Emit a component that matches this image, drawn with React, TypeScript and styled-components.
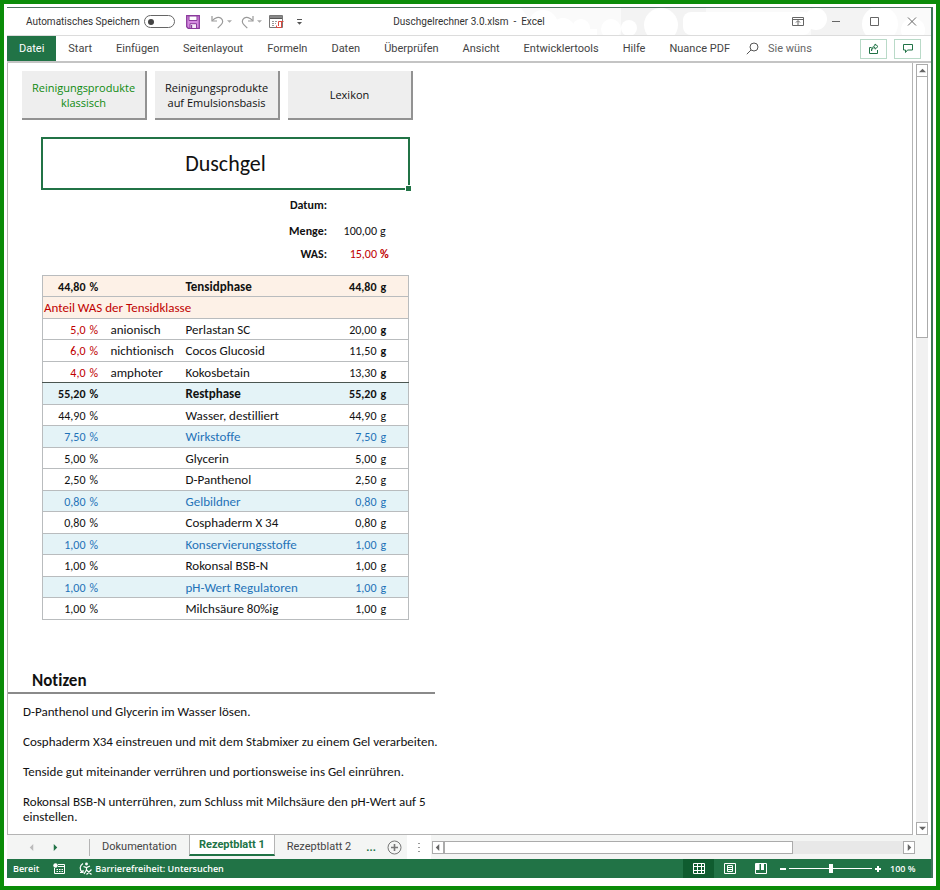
import React from "react";
import styled, { createGlobalStyle, css } from "styled-components";

const UI = `Roboto, "Open Sans", sans-serif`;
const BUTTON = `"Open Sans", "Noto Sans", sans-serif`;
const SHEET = `Carlito, Lato, "Open Sans", sans-serif`;
const GREEN = "#217346";

const GlobalStyle = createGlobalStyle`
  *, *::before, *::after { box-sizing: border-box; }
  body { margin: 0; background: #fff; }
  button, input { font: inherit; color: inherit; margin: 0; }
  button { padding: 0; border: 0; background: none; }
`;

const Frame = styled.div`
  min-height: 100vh;
  display: flex;
  border: 4px solid #0a8c08;
  padding: 3px 3px 8px;
  background: #fff;
`;

const Window = styled.div`
  flex: 1;
  min-width: 0;
  display: flex;
  flex-direction: column;
  border-top: 1px solid #4f7563;
  border-right: 2px solid #3d7558;
  font-family: ${UI};
  font-size: 11px;
  color: #444;
`;

/* ---------- title bar ---------- */

const TitleBar = styled.header`
  position: relative;
  height: 28px;
  display: grid;
  grid-template-columns: 1fr auto 1fr;
  align-items: center;
  border-bottom: 1px solid #dcdcdc;
  font-size: 10px;
  color: #333;
`;

const Clouds = styled.svg`
  position: absolute;
  top: 0;
  right: 0;
  width: 420px;
  height: 27px;
`;

const QuickAccess = styled.div`
  display: flex;
  align-items: center;
  padding-left: 19px;
`;

const AutoSave = styled.label`
  display: flex;
  align-items: center;
  gap: 4px;
`;

const Toggle = styled.input`
  appearance: none;
  width: 31px;
  height: 13px;
  border: 1px solid #666;
  border-radius: 7px;
  background: #fff;
  display: flex;
  align-items: center;
  padding-left: 3px;
  &::before {
    content: "";
    width: 6px;
    height: 6px;
    border-radius: 50%;
    background: #444;
  }
`;

const QuickIcons = styled.div`
  display: flex;
  align-items: center;
  margin-left: 11px;
`;

const QuickButton = styled.button<{ $gap: number }>`
  display: flex;
  margin-right: ${(p) => p.$gap}px;
`;

const DocTitle = styled.div`
  position: relative;
  white-space: pre;
`;

const WindowButtons = styled.div`
  position: relative;
  display: flex;
  justify-content: flex-end;
  gap: 26px;
  padding-right: 13px;
`;

const WindowButton = styled.button`
  display: flex;
`;

/* ---------- ribbon ---------- */

const Ribbon = styled.nav`
  height: 27px;
  display: flex;
  align-items: stretch;
  border-bottom: 2px solid #c4c4c4;
`;

const RibbonTab = styled.button<{ $active?: boolean }>`
  padding: 0 12px;
  white-space: nowrap;
  ${(p) =>
    p.$active &&
    css`
      background: ${GREEN};
      color: #fff;
    `}
`;

const Search = styled.label`
  display: flex;
  align-items: center;
  gap: 9px;
  margin-left: 4px;
`;

const SearchInput = styled.input`
  width: 60px;
  border: 0;
  padding: 0;
  outline: 0;
  background: transparent;
  &::placeholder { color: #666; opacity: 1; }
`;

const RibbonActions = styled.div`
  display: flex;
  align-items: center;
  gap: 7px;
  margin-left: auto;
  padding-right: 10px;
`;

const RibbonAction = styled.button`
  width: 27px;
  height: 20px;
  display: flex;
  align-items: center;
  justify-content: center;
  border: 1px solid #b9dac8;
`;

/* ---------- worksheet ---------- */

const Workspace = styled.div`
  flex: 1;
  display: flex;
`;

const Sheet = styled.main`
  flex: 1;
  min-width: 0;
  border: solid #b4b4b4;
  border-width: 0 1px 1px 1px;
  padding: 8px 0 4px;
  font-family: ${SHEET};
  font-size: 13px;
  font-variant-ligatures: none;
  color: #111;
`;

const MacroButtons = styled.div`
  display: flex;
  gap: 8px;
  padding-left: 14px;
`;

const MacroButton = styled.button<{ $current?: boolean }>`
  width: 125px;
  height: 49px;
  border: solid #929292;
  border-width: 0 2px 2px 0;
  background: #eee;
  font-family: ${BUTTON};
  font-size: 11px;
  line-height: 15px;
  color: ${(p) => (p.$current ? "#0f8a0f" : "#111")};
`;

const Recipe = styled.section`
  width: 369px;
  margin: 17px 0 0 33px;
`;

const TitleCell = styled.h1`
  position: relative;
  height: 53px;
  margin: 0;
  display: flex;
  align-items: center;
  justify-content: center;
  border: 2px solid ${GREEN};
  font-size: 22px;
  font-weight: 400;
  &::after {
    content: "";
    position: absolute;
    right: -3px;
    bottom: -3px;
    width: 5px;
    height: 5px;
    background: ${GREEN};
    outline: 1px solid #fff;
  }
`;

const Facts = styled.dl`
  margin: 3px 0 14px;
  display: grid;
  grid-template-columns: 286px 50px 1fr;
  grid-template-rows: 23px 30px 15px;
  align-items: center;
  font-size: 12px;
  font-weight: 700;
`;

const FactName = styled.dt`
  text-align: right;
`;

const FactValue = styled.dd<{ $red?: boolean }>`
  margin: 0;
  text-align: right;
  font-weight: 400;
  color: ${(p) => (p.$red ? "#c00000" : "inherit")};
`;

const FactUnit = styled.dd<{ $red?: boolean }>`
  margin: 0 0 0 3px;
  font-weight: ${(p) => (p.$red ? 700 : 400)};
  color: ${(p) => (p.$red ? "#c00000" : "inherit")};
`;

const Ingredients = styled.table`
  width: 367px;
  margin: 0 1px;
  table-layout: fixed;
  border-collapse: collapse;
  border: 1px solid #b9bcbe;
`;

type Tone = "tensid" | "rest" | "group" | "plain" | "was";

const tones = {
  tensid: css`background: #fdf1e7; font-weight: 700;`,
  was: css`color: #c00000; background: #fdf1e7;`,
  rest: css`background: #e4f3f7; font-weight: 700;`,
  group: css`background: #e4f3f7; color: #1f72b8;`,
  plain: css``,
};

const Row = styled.tr<{ $tone: Tone; $last?: boolean }>`
  height: 21px;
  border-bottom: 1px solid ${(p) => (p.$last ? "#4a5550" : "#b9bcbe")};
  &:nth-child(even) { height: 22px; }
  ${(p) => tones[p.$tone]}
`;

const Cell = styled.td<{ $num?: boolean; $red?: boolean; $bold?: boolean }>`
  padding: 1px 2px 0 1px;
  line-height: 16px;
  white-space: nowrap;
  text-align: ${(p) => (p.$num ? "right" : "left")};
  ${(p) => p.$red && "color: #c00000;"}
  ${(p) => p.$bold && "font-weight: 700;"}
`;

const AmountCell = styled(Cell)`
  padding: 1px 2px 0;
  font-size: 12px;
`;

const Col = styled.col<{ $w?: number }>`
  ${(p) => p.$w && `width: ${p.$w}px;`}
`;

const NotesTitle = styled.h2`
  width: 427px;
  margin: 50px 0 0;
  padding: 0 0 0 24px;
  border-bottom: 2px solid #8a8a8a;
  font-size: 17px;
  line-height: 22px;
`;

const Notes = styled.div`
  width: 455px;
  padding: 10px 0 0 15px;
  line-height: 15px;
`;

const Note = styled.p`
  margin: 0 0 15px;
  &:last-child { margin: 0; }
`;

/* ---------- scroll bars ---------- */

const VScroll = styled.div`
  width: 18px;
  display: flex;
  flex-direction: column;
  padding: 1px 3px 0 3px;
`;

const ScrollButton = styled.button`
  flex: none;
  width: 12px;
  height: 13px;
  display: flex;
  align-items: center;
  justify-content: center;
  border: 1px solid #ababab;
  background: #fff;
`;

const VTrack = styled.div`
  flex: 1;
  background: #f1f1f1;
`;

const VThumb = styled.div`
  height: 35%;
  border: 1px solid #ababab;
  border-top: 0;
  background: #fff;
`;

const HScroll = styled.div`
  flex: 1;
  display: flex;
  padding-right: 16px;
`;

const HTrack = styled.div`
  flex: 1;
  height: 13px;
  background: #e8e8e8;
`;

const HThumb = styled.div`
  width: 76%;
  height: 13px;
  border: 1px solid #ababab;
  background: #fff;
`;

/* ---------- sheet tabs ---------- */

const TabBar = styled.div`
  height: 24px;
  display: flex;
  align-items: center;
  background: #f4f5f4;
`;

const TabArrows = styled.div`
  width: 83px;
  height: 17px;
  display: flex;
  align-items: center;
  gap: 17px;
  padding-left: 21px;
  border-right: 1px solid #b4b4b4;
`;

const ArrowButton = styled.button`
  display: flex;
`;

const SheetTab = styled.button<{ $active?: boolean }>`
  align-self: flex-start;
  height: 22px;
  padding: 0 12px;
  white-space: nowrap;
  ${(p) =>
    p.$active &&
    css`
      height: 21px;
      padding: 0 9px;
      border: solid #b4b4b4;
      border-width: 0 1px;
      border-bottom: 2px solid ${GREEN};
      background: #fff;
      color: ${GREEN};
      font-weight: 700;
    `}
`;

const MoreTabs = styled.button`
  padding: 0 11px 0 3px;
  color: ${GREEN};
  font-weight: 700;
`;

const AddTab = styled.button`
  display: flex;
`;

const Grip = styled.div`
  width: 24px;
  align-self: stretch;
  margin: 0 1px 0 5px;
  display: flex;
  align-items: center;
  justify-content: center;
  background: #fff;
`;

/* ---------- status bar ---------- */

const StatusBar = styled.footer`
  height: 19px;
  display: flex;
  align-items: center;
  padding-left: 6px;
  background: ${GREEN};
  color: #fff;
  font-family: ${BUTTON};
  font-size: 9px;
  font-weight: 600;
`;

const StatusButton = styled.button`
  display: flex;
  align-items: center;
  gap: 3px;
  margin-left: 14px;
`;

const Views = styled.div`
  margin-left: auto;
  align-self: stretch;
  display: flex;
`;

const ViewButton = styled.button<{ $active?: boolean }>`
  width: 31px;
  display: flex;
  align-items: center;
  justify-content: center;
  background: ${(p) => (p.$active ? "#0f5c2f" : "transparent")};
`;

const ZoomControl = styled.div`
  display: flex;
  align-items: center;
  gap: 3px;
  margin-left: 4px;
`;

const ZoomStep = styled.button`
  display: flex;
`;

const ZoomSlider = styled.input`
  appearance: none;
  width: 83px;
  height: 10px;
  background: linear-gradient(#fff, #fff) center / 100% 1px no-repeat;
  &::-webkit-slider-thumb {
    appearance: none;
    width: 4px;
    height: 9px;
    background: #fff;
  }
`;

const ZoomValue = styled.output`
  width: 26px;
  margin: 0 15px 0 6px;
  white-space: nowrap;
`;

/* ---------- icons ---------- */

const Arrow = ({ dir, color = "#666", size = 7 }: { dir: "up" | "down" | "left" | "right"; color?: string; size?: number }) => {
  const d = { up: "M0 6h8L4 2z", down: "M0 2h8L4 6z", left: "M6 0v8L2 4z", right: "M2 0v8l4-4z" }[dir];
  return (
    <svg width={size} height={size} viewBox="0 0 8 8">
      <path d={d} fill={color} />
    </svg>
  );
};

const SaveIcon = () => (
  <svg width="14" height="14" viewBox="0 0 14 14">
    <path d="M.7.7h12.6v12.6H2.2L.7 11.8z" fill="#d58be0" stroke="#8a3a9c" strokeWidth="1.3" />
    <path d="M3 1h8v4.5H3z" fill="#fff" stroke="#8a3a9c" />
    <path d="M4 13V8.700h6.500V13" fill="#f6e8f8" stroke="#8a3a9c" />
    <path d="M5.500 10v3" stroke="#8a3a9c" strokeWidth="1.3" />
  </svg>
);

const UndoIcon = ({ flip }: { flip?: boolean }) => (
  <svg width="13" height="14" viewBox="0 0 13 14" fill="none" stroke="#999" strokeWidth="1.2">
    <g transform={flip ? "translate(13 0) scale(-1 1)" : undefined}>
      <path d="M1 1v5h5" />
      <path d="M1.3 5.7C4 2.4 7.8 1.5 10 3.3c2.4 2 2 4.6.2 6.4L6.7 13.2" />
    </g>
  </svg>
);

const FormIcon = () => (
  <svg width="15" height="14" viewBox="0 0 15 14" fill="none">
    <path d="M.5.5h13v12H.5z" fill="#fff" stroke="#777" />
    <path d="M1 2h12" stroke="#888" strokeWidth="2" />
    <path d="M1 3.500h12" stroke="#555" />
    <path d="M3 6.500h2m1 0h2M3 8.500h2m1 0h1M3 10.500h2" stroke="#999" />
    <path d="M9.500 11V6.500h5M12.500 7v5.500h-5v-2" stroke="#dc4a40" />
  </svg>
);

const ShareIcon = () => (
  <svg width="12" height="12" viewBox="0 0 12 12" fill="none" stroke={GREEN} strokeWidth="1">
    <path d="M3.500 4.500h-2v6h8V7" />
    <path d="M3.500 8c.2-2.300 1.500-3.300 3.500-3.500V6.200L10 3.500 7 1v1.700C4.700 3.200 3.500 5 3.500 8z" />
  </svg>
);

const CommentIcon = () => (
  <svg width="12" height="11" viewBox="0 0 12 11" fill="none" stroke={GREEN}>
    <path d="M1.500 1.500h9v5.500H5.500L3.500 9.500V7h-2z" />
  </svg>
);

/* ---------- data ---------- */

const ribbonTabs = ["Start", "Einfügen", "Seitenlayout", "Formeln", "Daten", "Überprüfen", "Ansicht", "Entwicklertools", "Hilfe", "Nuance PDF"];

interface Line {
  share: string;
  kind?: string;
  name: string;
  grams: string;
  tone: Tone;
}

const tensides: Line[] = [
  { share: "5,0", kind: "anionisch", name: "Perlastan SC", grams: "20,00", tone: "plain" },
  { share: "6,0", kind: "nichtionisch", name: "Cocos Glucosid", grams: "11,50", tone: "plain" },
  { share: "4,0", kind: "amphoter", name: "Kokosbetain", grams: "13,30", tone: "plain" },
];

const rest: Line[] = [
  { share: "55,20", name: "Restphase", grams: "55,20", tone: "rest" },
  { share: "44,90", name: "Wasser, destilliert", grams: "44,90", tone: "plain" },
  { share: "7,50", name: "Wirkstoffe", grams: "7,50", tone: "group" },
  { share: "5,00", name: "Glycerin", grams: "5,00", tone: "plain" },
  { share: "2,50", name: "D-Panthenol", grams: "2,50", tone: "plain" },
  { share: "0,80", name: "Gelbildner", grams: "0,80", tone: "group" },
  { share: "0,80", name: "Cosphaderm X 34", grams: "0,80", tone: "plain" },
  { share: "1,00", name: "Konservierungsstoffe", grams: "1,00", tone: "group" },
  { share: "1,00", name: "Rokonsal BSB-N", grams: "1,00", tone: "plain" },
  { share: "1,00", name: "pH-Wert Regulatoren", grams: "1,00", tone: "group" },
  { share: "1,00", name: "Milchsäure 80%ig", grams: "1,00", tone: "plain" },
];

const notes = [
  "D-Panthenol und Glycerin im Wasser lösen.",
  "Cosphaderm X34 einstreuen und mit dem Stabmixer zu einem Gel verarbeiten.",
  "Tenside gut miteinander verrühren und portionsweise ins Gel einrühren.",
  "Rokonsal BSB-N unterrühren, zum Schluss mit Milchsäure den pH-Wert auf 5 einstellen.",
];

const IngredientRow = ({ line, tenside, last }: { line: Line; tenside?: boolean; last?: boolean }) => (
  <Row $tone={line.tone} $last={last}>
    <AmountCell $num $red={tenside}>{line.share}</AmountCell>
    <AmountCell $red={tenside}>%</AmountCell>
    <Cell>{line.kind}</Cell>
    <Cell>{line.name}</Cell>
    <AmountCell $num>{line.grams}</AmountCell>
    <AmountCell $bold={tenside}>g</AmountCell>
  </Row>
);

export default function App() {
  return (
    <>
      <GlobalStyle />
      <Frame>
        <Window>
          <TitleBar>
            <Clouds viewBox="0 0 420 27" aria-hidden="true">
              <path d="M10 0h410v27H30z" fill="#fafafa" />
              <path d="M110 0h85v27h-85zM300 0h60v27h-60z" fill="#f3f3f3" />
              <g fill="#fff">
                <circle cx="32" cy="17" r="15" /><circle cx="52" cy="22" r="12" /><circle cx="70" cy="20" r="9" />
                <circle cx="100" cy="21" r="10" /><circle cx="118" cy="20" r="8" /><circle cx="150" cy="17" r="17" />
                <rect x="0" y="21" width="86" height="6" /><rect x="172" y="4" width="128" height="23" rx="8" />
                <circle cx="305" cy="11" r="11" /><circle cx="369" cy="16" r="18" /><circle cx="402" cy="22" r="12" />
              </g>
            </Clouds>
            <QuickAccess>
              <AutoSave>
                Automatisches Speichern
                <Toggle type="checkbox" role="switch" />
              </AutoSave>
              <QuickIcons>
                <QuickButton $gap={11} aria-label="Speichern"><SaveIcon /></QuickButton>
                <QuickButton $gap={3} aria-label="Rückgängig"><UndoIcon /></QuickButton>
                <QuickButton $gap={9} aria-label="Rückgängig-Liste"><Arrow dir="down" size={5} color="#aaa" /></QuickButton>
                <QuickButton $gap={3} aria-label="Wiederholen"><UndoIcon flip /></QuickButton>
                <QuickButton $gap={7} aria-label="Wiederholen-Liste"><Arrow dir="down" size={5} color="#aaa" /></QuickButton>
                <QuickButton $gap={13} aria-label="Formular"><FormIcon /></QuickButton>
                <QuickButton $gap={0} aria-label="Symbolleiste anpassen">
                  <svg width="5" height="6" viewBox="0 0 5 6"><path d="M0 0h5v1H0zM0 3h5L2.500 5.800z" fill="#555" /></svg>
                </QuickButton>
              </QuickIcons>
            </QuickAccess>
            <DocTitle>{"Duschgelrechner 3.0.xlsm  -  Excel"}</DocTitle>
            <WindowButtons>
              <WindowButton aria-label="Menübandanzeige">
                <svg width="12" height="9" viewBox="0 0 12 9" fill="none" stroke="#666"><path d="M.5.5h11v8H.5zM.5 2.500h11M6 8V4M4 5.500l2-2 2 2" /></svg>
              </WindowButton>
              <WindowButton aria-label="Minimieren">
                <svg width="12" height="9" viewBox="0 0 12 9" stroke="#666"><path d="M2 4.500h8" /></svg>
              </WindowButton>
              <WindowButton aria-label="Maximieren">
                <svg width="12" height="9" viewBox="0 0 12 9" fill="none" stroke="#666"><path d="M2.500.5h8v8h-8z" /></svg>
              </WindowButton>
              <WindowButton aria-label="Schließen">
                <svg width="12" height="9" viewBox="0 0 12 9" stroke="#666"><path d="M2 .5l8 8M10 .5l-8 8" /></svg>
              </WindowButton>
            </WindowButtons>
          </TitleBar>

          <Ribbon>
            <RibbonTab $active>Datei</RibbonTab>
            {ribbonTabs.map((t) => <RibbonTab key={t}>{t}</RibbonTab>)}
            <Search>
              <svg width="13" height="13" viewBox="0 0 13 13" fill="none" stroke="#555"><circle cx="8" cy="5" r="4" /><path d="M5 8L.8 12.200" /></svg>
              <SearchInput placeholder="Sie wüns" aria-label="Suchen" />
            </Search>
            <RibbonActions>
              <RibbonAction aria-label="Freigeben"><ShareIcon /></RibbonAction>
              <RibbonAction aria-label="Kommentare"><CommentIcon /></RibbonAction>
            </RibbonActions>
          </Ribbon>

          <Workspace>
            <Sheet>
              <MacroButtons>
                <MacroButton $current>Reinigungsprodukte<br />klassisch</MacroButton>
                <MacroButton>Reinigungsprodukte<br />auf Emulsionsbasis</MacroButton>
                <MacroButton>Lexikon</MacroButton>
              </MacroButtons>
              <Recipe>
                <TitleCell>Duschgel</TitleCell>
                <Facts>
                  <FactName>Datum:</FactName><FactValue /><FactUnit />
                  <FactName>Menge:</FactName><FactValue>100,00</FactValue><FactUnit>g</FactUnit>
                  <FactName>WAS:</FactName><FactValue $red>15,00</FactValue><FactUnit $red>%</FactUnit>
                </Facts>
                <Ingredients>
                  <colgroup>
                    <Col $w={45} /><Col $w={22} /><Col $w={75} /><Col $w={145} /><Col $w={49} /><Col />
                  </colgroup>
                  <tbody>
                    <IngredientRow line={{ share: "44,80", name: "Tensidphase", grams: "44,80", tone: "tensid" }} />
                    <Row $tone="was"><Cell colSpan={6}>Anteil WAS der Tensidklasse</Cell></Row>
                    {tensides.map((l, i) => (
                      <IngredientRow key={l.name} line={l} tenside last={i === tensides.length - 1} />
                    ))}
                    {rest.map((l) => <IngredientRow key={l.name} line={l} />)}
                  </tbody>
                </Ingredients>
              </Recipe>
              <NotesTitle>Notizen</NotesTitle>
              <Notes>{notes.map((n) => <Note key={n}>{n}</Note>)}</Notes>
            </Sheet>
            <VScroll>
              <ScrollButton aria-label="Nach oben"><Arrow dir="up" /></ScrollButton>
              <VTrack><VThumb /></VTrack>
              <ScrollButton aria-label="Nach unten"><Arrow dir="down" /></ScrollButton>
            </VScroll>
          </Workspace>

          <TabBar>
            <TabArrows>
              <ArrowButton aria-label="Vorherige Blätter"><Arrow dir="left" color="#bbb" /></ArrowButton>
              <ArrowButton aria-label="Nächste Blätter"><Arrow dir="right" color={GREEN} /></ArrowButton>
            </TabArrows>
            <SheetTab>Dokumentation</SheetTab>
            <SheetTab $active>Rezeptblatt 1</SheetTab>
            <SheetTab>Rezeptblatt 2</SheetTab>
            <MoreTabs>...</MoreTabs>
            <AddTab aria-label="Neues Blatt">
              <svg width="15" height="15" viewBox="0 0 15 15" fill="none" stroke="#777"><circle cx="7.500" cy="7.500" r="6.500" /><path d="M7.500 4v7M4 7.500h7" strokeWidth="1.600" /></svg>
            </AddTab>
            <Grip>
              <svg width="2" height="9" viewBox="0 0 2 9" fill="#999"><path d="M0 0h2v1H0zM0 4h2v1H0zM0 8h2v1H0z" /></svg>
            </Grip>
            <HScroll>
              <ScrollButton aria-label="Nach links"><Arrow dir="left" /></ScrollButton>
              <HTrack><HThumb /></HTrack>
              <ScrollButton aria-label="Nach rechts"><Arrow dir="right" /></ScrollButton>
            </HScroll>
          </TabBar>

          <StatusBar>
            Bereit
            <StatusButton aria-label="Makro aufzeichnen">
              <svg width="12" height="11" viewBox="0 0 12 11" fill="none" stroke="#fff"><path d="M5 1.500h6.500v9h-10V5M5 3.500h6" /><path d="M3.500 6.500h1.500m1 0h1.500m1 0h1.500M3.500 8.500h1.500m1 0h1.500m1 0h1.500" /><circle cx="2.500" cy="2.500" r="2.200" fill="#fff" stroke="none" /></svg>
            </StatusButton>
            <StatusButton>
              <svg width="13" height="13" viewBox="0 0 13 13" fill="none" stroke="#fff" strokeWidth="1.200"><path d="M4 1.500C.5 3.500.2 8 3.500 10.500M1 10.500h3V8" /><circle cx="7.500" cy="2" r=".8" fill="#fff" /><path d="M4.500 4.500l3 1 3.500-1.500M7.500 5.500v2.500L5 12M7 7.500l5.500 5M12.500 7.500l-5 5" /></svg>
              Barrierefreiheit: Untersuchen
            </StatusButton>
            <Views>
              <ViewButton $active aria-label="Normal">
                <svg width="12" height="11" viewBox="0 0 12 11" fill="none" stroke="#fff"><path d="M.5.5h11v10H.5zM.5 3.500h11M.5 7.500h11M4.500.5v10M8.500.5v10" /></svg>
              </ViewButton>
              <ViewButton aria-label="Seitenlayout">
                <svg width="12" height="11" viewBox="0 0 12 11" fill="none" stroke="#fff"><path d="M.5.5h11v10H.5zM3.500 2.500h5v6h-5zM4 4.500h4M4 6.500h4" /></svg>
              </ViewButton>
              <ViewButton aria-label="Umbruchvorschau">
                <svg width="12" height="11" viewBox="0 0 12 11" fill="none" stroke="#fff"><path d="M.5.5h11v10H.5z" /><path d="M1 1h3.500v6H1zM6 1h3v6H6z" fill="#fff" stroke="none" /></svg>
              </ViewButton>
            </Views>
            <ZoomControl>
              <ZoomStep aria-label="Verkleinern"><svg width="6" height="6" viewBox="0 0 6 6"><path d="M0 2h6v2H0z" fill="#fff" /></svg></ZoomStep>
              <ZoomSlider type="range" min={10} max={190} defaultValue={100} aria-label="Zoom" />
              <ZoomStep aria-label="Vergrößern"><svg width="6" height="6" viewBox="0 0 6 6"><path d="M0 2h6v2H0zM2 0h2v6H2z" fill="#fff" /></svg></ZoomStep>
              <ZoomValue>100 %</ZoomValue>
            </ZoomControl>
          </StatusBar>
        </Window>
      </Frame>
    </>
  );
}
